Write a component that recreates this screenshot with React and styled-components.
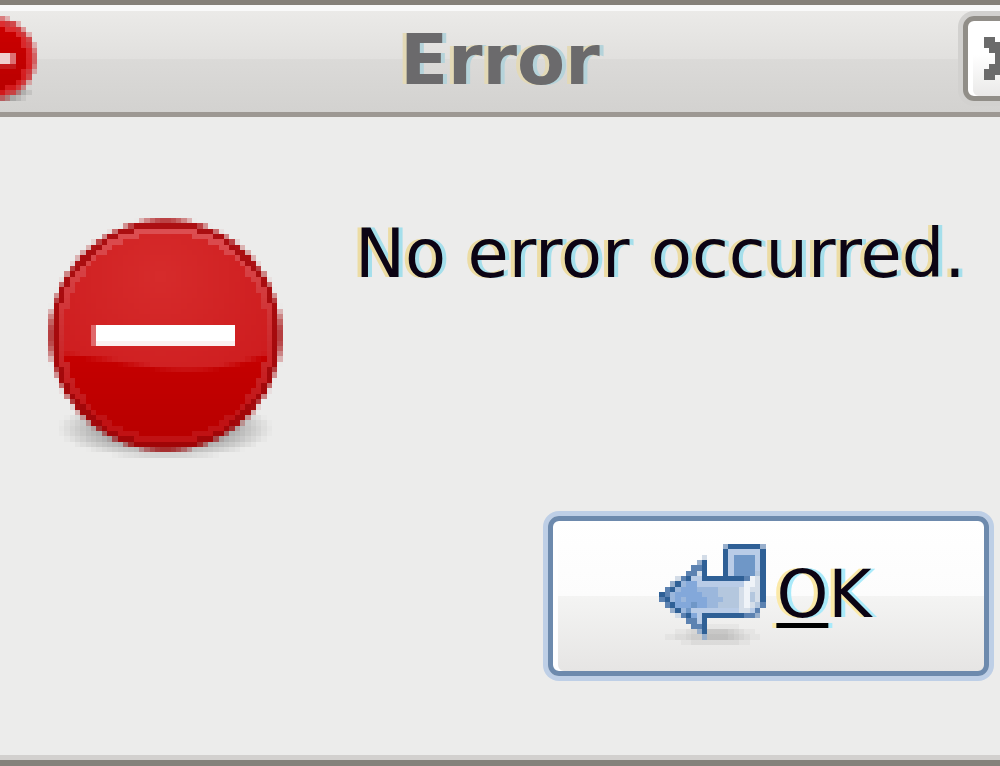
import React from "react";
import styled, { createGlobalStyle } from "styled-components";

const GlobalStyle = createGlobalStyle`
  * {
    box-sizing: border-box;
  }

  body {
    margin: 0;
    background: #ececeb;
    font-family: "DejaVu Sans", sans-serif;
  }
`;

const Dialog = styled.main`
  display: flex;
  flex-direction: column;
  min-height: 100vh;
  overflow: hidden;
  background: #ececeb;
  border-top: 5px solid #858079;
  border-bottom: 6px solid #84827b;
`;

const TitleBar = styled.header`
  display: grid;
  grid-template-columns: 85px 1fr 85px;
  align-items: start;
  height: 112px;
  margin: 0 -48px;
  padding-top: 11px;
  background: linear-gradient(
    #f9f9f9 6px,
    #ebeae8 6px,
    #e1e0de 54px,
    #dbdad8 54px,
    #d3d2d0 100%
  );
  border-bottom: 5px solid #9d9893;
`;

const Title = styled.h1`
  margin: 0;
  padding-top: 4px;
  color: #6b6a6c;
  font-size: 70px;
  font-weight: 700;
  line-height: 80px;
  text-align: center;
  text-shadow: -4px 0 #e3d9b6, 4px 0 #b5d3da;
`;

const CloseButton = styled.button`
  display: flex;
  align-items: center;
  justify-content: center;
  width: 85px;
  height: 85px;
  padding: 0;
  background: linear-gradient(#fff 45%, #eae9e8);
  border: 5px solid #918e88;
  border-radius: 11px;
  box-shadow: 0 0 0 5px #d2d1cf, inset 5px 0 #fff;
`;

const Body = styled.section`
  display: flex;
  flex: 1;
  gap: 72px;
  align-items: flex-start;
  padding: 97px 24px 52px 48px;
`;

const Message = styled.p`
  margin: 0;
  color: #0c0414;
  font-size: 67px;
  line-height: 80px;
  text-shadow: -4px 0 #ecdca3, 4px 0 #a5dfeb;
`;

const Actions = styled.footer`
  display: flex;
  justify-content: flex-end;
  padding: 0 11px 79px;
  border-bottom: 5px solid #d2d0ce;
`;

const Button = styled.button`
  display: flex;
  align-items: center;
  justify-content: center;
  gap: 10px;
  width: 441px;
  height: 160px;
  padding: 0 6px 3px 0;
  color: #0c0414;
  font-family: inherit;
  font-size: 66px;
  line-height: 80px;
  text-shadow: -4px 0 #fbe9a8, 4px 0 #a9eafa;
  background: linear-gradient(#fff, #fcfcfc 50%, #f4f4f3 50%, #e6e5e4);
  border: 5px solid #6d8aad;
  border-radius: 11px;
  box-shadow: 0 0 0 5px #becfe6, inset 5px 0 #fff;
`;

const Mnemonic = styled.span`
  text-decoration: underline #000 5px;
  text-decoration-skip-ink: none;
  text-underline-offset: 6px;
`;

const Pixels = styled.svg`
  display: block;
  flex: none;
  margin-top: ${props => props.$top || 0}px;
`;

const mix = (from, to, amount) => {
  const t = Math.min(1, Math.max(0, amount));
  return from.map((value, i) => Math.round(value + (to[i] - value) * t));
};

// Lower edge of the glossy half, in cells. It dips right of the middle.
const glossEdge = x => {
  const t = Math.min(1, Math.max(0, (x - 3) / 38));
  return 25.7 + 2.8 * Math.sin(Math.PI * t ** 1.4);
};

const largeFace = (x, y, edge) => {
  const glow = Math.hypot(x - 21, y - 11) / 24;
  const gloss = mix([214, 43, 43], [206, 29, 31], glow);
  const base = mix([197, 0, 0], [182, 0, 0], (y - 26) / 18);
  const fill = mix(gloss, base, y + 0.5 - glossEdge(x));
  if (edge < 1.5) return mix([172, 15, 18], [160, 5, 7], y / 44);
  if (edge < 2.7) return mix([222, 82, 85], [192, 18, 20], y / 38);
  return fill;
};

const smallFace = (x, y, edge) => {
  if (edge < 1.2) return [207, 58, 61];
  if (edge < 2.2) return mix([222, 50, 52], [208, 22, 24], y / 16);
  return mix([207, 0, 0], [182, 0, 0], y / 16);
};

const discCells = (size, face) => {
  const cells = [];
  const r = size / 2;
  const rows = size + Math.round(size / 22);
  for (let y = 0; y < rows; y += 1) {
    for (let x = 0; x < size; x += 1) {
      const px = x + 0.5;
      const py = y + 0.5;
      const edge = r - Math.hypot(px - r, py - r);
      const shade = Math.hypot(
        (px - r) / (r * 0.92),
        (py - r * 1.8) / (r * 0.26)
      );
      if (shade < 1) {
        cells.push([x, y, "#000", Math.min(0.36, (1 - shade) * 0.7)]);
      }
      if (edge > -0.2) {
        cells.push([
          x,
          y,
          `rgb(${face(px, py, edge).join(",")})`,
          Math.min(1, (edge + 0.2) / 0.9)
        ]);
      }
    }
  }
  return cells;
};

const renderCell = ([x, y, fill, opacity]) => (
  <rect
    key={`${x}-${y}-${fill}`}
    x={x}
    y={y}
    width="1"
    height="1"
    fill={fill}
    fillOpacity={opacity}
  />
);

const largeDisc = discCells(44, largeFace);
const smallDisc = discCells(16, smallFace);

const ErrorIcon = () => (
  <Pixels
    $top={4}
    width="235"
    height="245"
    viewBox="0 0 44 46"
    shapeRendering="crispEdges"
    role="img"
    aria-label="Error"
  >
    {largeDisc.map(renderCell)}
    <rect x="8" y="20" width="1" height="4" fill="#e0686b" />
    <rect x="9" y="20" width="26" height="4" fill="#fff" />
    <rect x="9" y="23" width="26" height="1" fill="#fbefef" />
  </Pixels>
);

const TitleIcon = () => (
  <Pixels
    width="85"
    height="90"
    viewBox="0 0 16 17"
    shapeRendering="crispEdges"
    aria-hidden="true"
  >
    {smallDisc.map(renderCell)}
    <rect x="4" y="7" width="7" height="2" fill="#efcfcf" />
    <rect x="11" y="7" width="1" height="2" fill="#dc7072" />
    <rect x="4" y="9" width="8" height="1" fill="#c41a1c" />
  </Pixels>
);

const CloseIcon = () => (
  <svg
    width="43"
    height="43"
    viewBox="0 0 8 8"
    shapeRendering="crispEdges"
    aria-hidden="true"
  >
    <path
      fill="#6b6b6b"
      d="M0 0h2v1h1v1h2v-1h1v-1h2v2h-1v1h-1v2h1v1h1v2h-2v-1h-1v-1h-2v1h-1v1h-2v-2h1v-1h1v-2h-1v-1h-1z"
    />
  </svg>
);

const arrowPalette = {
  D: "#2f6096",
  M: "#5c82b1",
  m: "#98afcc",
  F: "#d3dce7",
  L: "#b9cce7",
  B: "#83a8da",
  b: "#9bb7dc",
  c: "#b4c7de",
  S: "#6f97c7",
  l: "#d5dee9",
  w: "#eff3f8"
};

const arrowRows = [
  "............mDDDDDDm",
  "............DLLLLLLD",
  "........F...DLSSSSLD",
  ".......mD...DLSSSSLD",
  "......MMD...DLSSSSLD",
  ".....MMlD...DLSSSScD",
  "...FMDLLDDDDDDDDMwlD",
  "..mDbBBLLLLLLLLLwwlD",
  ".MDbBBBbbbbcccclwllD",
  "DMbBBBBBbbbcccclwclD",
  "MDbBbBBBBbbbccclwclD",
  ".MDBBBSBBbbcccclwlcM",
  "..mDbSLLLLLLLLLllLM.",
  "...FMDBLDDDDDDDDMMm.",
  ".....MMLD...........",
  "......MMD...........",
  ".......mD...........",
  "........m..........."
];

const ArrowIcon = () => (
  <svg
    width="107"
    height="101"
    viewBox="0 0 20 19"
    shapeRendering="crispEdges"
    aria-hidden="true"
  >
    <g fill="#000" fillOpacity="0.03">
      <rect x="6" y="15" width="9" height="1" />
      <rect x="3" y="16" width="15" height="1" />
      <rect x="1" y="17" width="18" height="1" />
      <rect x="4" y="18" width="13" height="1" />
      <rect x="3" y="17" width="14" height="1" />
      <rect x="5" y="16" width="11" height="2" />
      <rect x="6" y="16" width="9" height="3" />
      <rect x="8" y="16" width="6" height="2" />
      <rect x="9" y="16" width="4" height="2" />
    </g>
    {arrowRows.map((row, y) =>
      row
        .split("")
        .map((key, x) =>
          arrowPalette[key] ? renderCell([x, y, arrowPalette[key], 1]) : null
        )
    )}
  </svg>
);

const App = () => (
  <>
    <GlobalStyle />
    <Dialog>
      <TitleBar>
        <TitleIcon />
        <Title>Error</Title>
        <CloseButton type="button" aria-label="Close">
          <CloseIcon />
        </CloseButton>
      </TitleBar>
      <Body>
        <ErrorIcon />
        <Message>No error occurred.</Message>
      </Body>
      <Actions>
        <Button type="button">
          <ArrowIcon />
          <span>
            <Mnemonic>O</Mnemonic>K
          </span>
        </Button>
      </Actions>
    </Dialog>
  </>
);

export default App;
